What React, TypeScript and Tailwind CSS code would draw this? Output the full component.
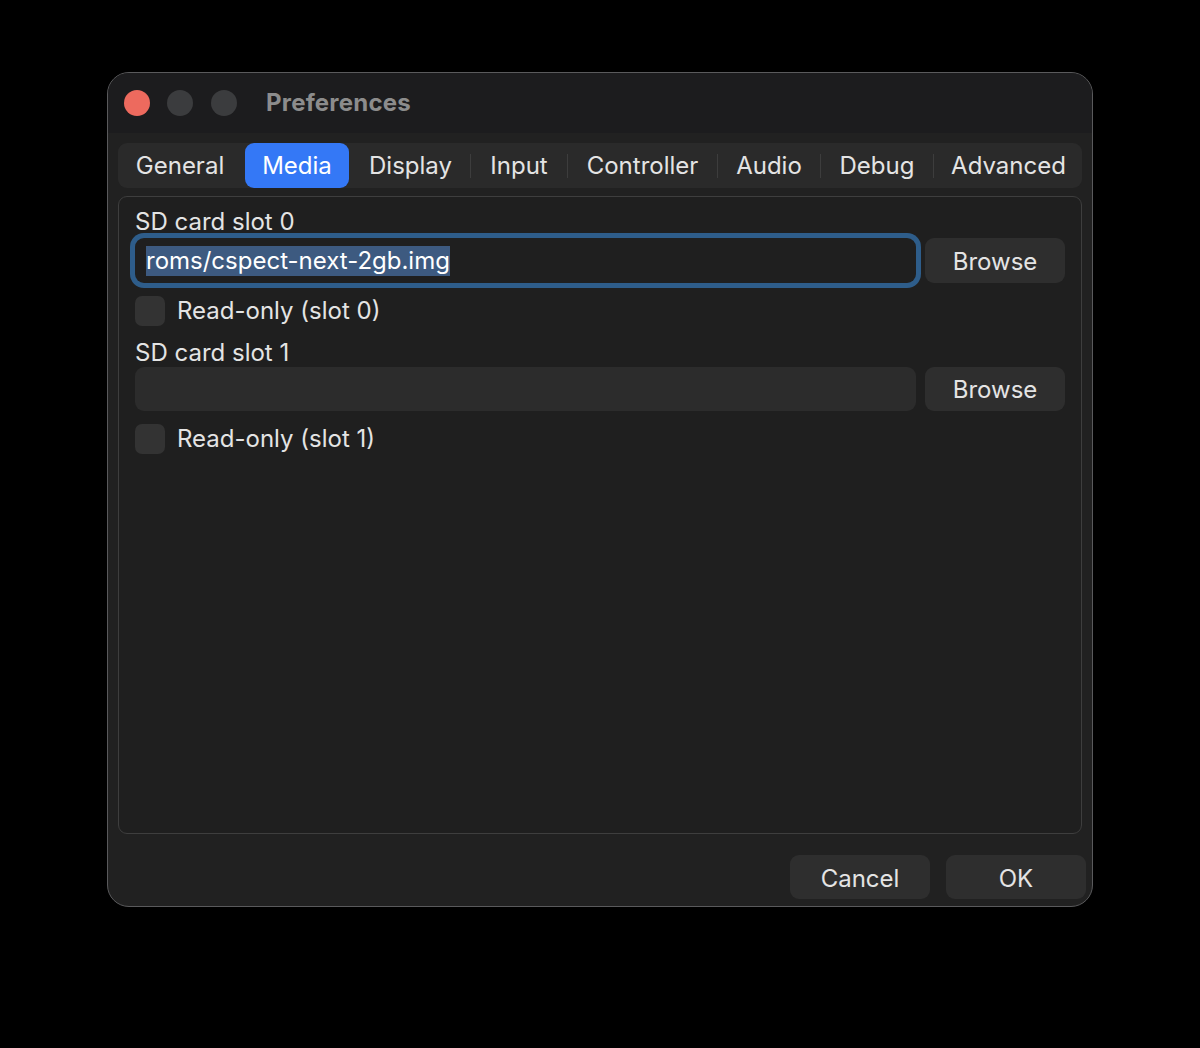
import React from 'react';

const tabs = [
  { name: 'General', w: 'w-[124px]' },
  { name: 'Media', w: 'w-[104px]' },
  { name: 'Display', w: 'w-[117px]' },
  { name: 'Input', w: 'w-[94px]' },
  { name: 'Controller', w: 'w-[147px]' },
  { name: 'Audio', w: 'w-[100px]' },
  { name: 'Debug', w: 'w-[110px]' },
  { name: 'Advanced', w: 'w-[147px]' },
];
const active = 'Media';

const font = { fontFamily: 'Inter, "Noto Sans", sans-serif' };

const Checkbox: React.FC<{ label: string }> = ({ label }) => (
  <div className="flex items-center h-[30px]">
    <div className="w-[30px] h-[30px] rounded-[7px] bg-[#333333]" />
    <span className="ml-[12px] text-[24px] leading-[30px] text-[#e4e4e4]">{label}</span>
  </div>
);

const Button: React.FC<{ label: string; className?: string }> = ({ label, className }) => (
  <div
    className={`flex items-center justify-center rounded-[9px] bg-[#2e2e2e] text-[24px] text-[#e4e4e4] ${className ?? ''}`}
  >
    {label}
  </div>
);

export default function App() {
  return (
    <div className="w-[1200px] h-[1048px] bg-black pt-[72px] pl-[107px]" style={font}>
      <div className="w-[986px] h-[835px] rounded-[22px] border border-[#5a5a5c] overflow-hidden flex flex-col bg-[#212121]">
        {/* title bar */}
        <div className="h-[60px] shrink-0 bg-[#1c1c1e] flex items-center pl-[16px]">
          <div className="w-[26px] h-[26px] rounded-full bg-[#ed6a5e]" />
          <div className="w-[26px] h-[26px] rounded-full bg-[#3b3c3e] ml-[17px]" />
          <div className="w-[26px] h-[26px] rounded-full bg-[#3b3c3e] ml-[18px]" />
          <span className="ml-[29px] text-[24px] font-bold tracking-[0.2px] text-[#8c8c8c]">Preferences</span>
        </div>

        {/* body */}
        <div className="flex-1 flex flex-col pt-[10px] pl-[10px] pr-[6px] pb-[7px]">
          <div className="h-[45px] w-[964px] shrink-0 rounded-[9px] bg-[#2a2a2a] flex items-center">
            {tabs.map((t, i) => {
              const prev = tabs[i - 1];
              const showSep = i > 0 && t.name !== active && prev.name !== active;
              return (
                <React.Fragment key={t.name}>
                  {i > 0 && (
                    <div className="w-[3px] h-[24px] flex justify-center">
                      {showSep && <div className="w-px h-full bg-[#3d3d3d]" />}
                    </div>
                  )}
                  <div
                    className={`h-[45px] ${t.w} flex items-center justify-center rounded-[9px] text-[24px] whitespace-nowrap ${
                      t.name === active ? 'bg-[#3478f6] text-white' : 'text-[#e4e4e4]'
                    }`}
                  >
                    {t.name}
                  </div>
                </React.Fragment>
              );
            })}
          </div>

          <div className="mt-[8px] w-[964px] flex-1 rounded-[9px] border border-[#3e3e3e] bg-[#1f1f1f] pl-[16px] pr-[16px] pt-[9px]">
            <div className="h-[28px] text-[24px] leading-[32px] text-[#e4e4e4]">SD card slot 0</div>
            <div className="mt-[4px] flex items-center">
              <div className="w-[781px] h-[45px] rounded-[9px] bg-[#1f1f1f] ring-[5px] ring-[#2e5d8a] flex items-center pl-[11px]">
                <span className="bg-[#3d5a80] text-white text-[24px] leading-[30px]">roms/cspect-next-2gb.img</span>
              </div>
              <Button label="Browse" className="ml-[9px] w-[140px] h-[45px] pt-[2px]" />
            </div>
            <div className="mt-[13px]">
              <Checkbox label="Read-only (slot 0)" />
            </div>

            <div className="mt-[11px] h-[28px] text-[24px] leading-[32px] text-[#e4e4e4]">SD card slot 1</div>
            <div className="mt-[2px] flex items-center">
              <div className="w-[781px] h-[44px] rounded-[9px] bg-[#2c2c2c]" />
              <Button label="Browse" className="ml-[9px] w-[140px] h-[44px] pt-[2px]" />
            </div>
            <div className="mt-[13px]">
              <Checkbox label="Read-only (slot 1)" />
            </div>
          </div>

          <div className="mt-[21px] flex justify-end gap-[16px]">
            <Button label="Cancel" className="w-[140px] h-[44px] pt-[3px]" />
            <Button label="OK" className="w-[140px] h-[44px] pt-[3px]" />
          </div>
        </div>
      </div>
    </div>
  );
}
